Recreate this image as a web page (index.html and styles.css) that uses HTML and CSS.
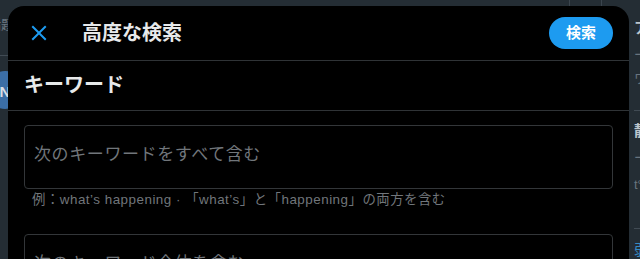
FILE: index.html
```html
<!DOCTYPE html>
<html lang="ja">
<head>
<meta charset="utf-8">
<title>高度な検索</title>
<link rel="stylesheet" href="styles.css">
</head>
<body>
<div class="page">
  <nav class="bg-nav">
    <div class="bg-nav-top"><span class="bg-nav-glyph">話題</span></div>
    <div class="bg-nav-item"><div class="bg-avatar">N</div></div>
  </nav>
  <main class="bg-main">
    <div class="bg-tabs"><span class="bg-tab"></span><span class="bg-tab"></span></div>
  </main>
  <aside class="bg-side">
    <div class="bg-card bg-card-first">
      <div class="bg-strong">アカウント</div>
      <div class="bg-muted">ー/ トレンド</div>
      <div class="bg-muted">ワッ</div>
    </div>
    <div class="bg-card">
      <div class="bg-strong">静岡</div>
      <div class="bg-muted">ー/ トレンド</div>
      <div class="bg-muted">t° ツイート</div>
    </div>
    <div class="bg-link">弱</div>
  </aside>
</div>

<div class="modal">
  <header class="modal-header">
    <button class="close-btn" type="button" aria-label="閉じる">
      <svg viewBox="0 0 24 24" width="24" height="24"><path d="M10.59 12L4.54 5.96l1.42-1.420L12 10.59l6.04-6.05 1.42 1.42L13.41 12l6.05 6.04-1.42 1.42L12 13.41l-6.04 6.05-1.42-1.42L10.59 12z"/></svg>
    </button>
    <h1 class="modal-title">高度な検索</h1>
    <button class="search-btn" type="button">検索</button>
  </header>
  <section class="section">
    <h2 class="section-title">キーワード</h2>
  </section>
  <div class="field">
    <div class="input-box"><span class="placeholder">次のキーワードをすべて含む</span></div>
    <div class="hint">例：what’s happening · 「what’s」と「happening」の両方を含む</div>
  </div>
  <div class="field">
    <div class="input-box"><span class="placeholder">次のキーワード全体を含む</span></div>
  </div>
</div>
</body>
</html>
```
FILE: styles.css
```css
* { box-sizing: border-box; }
html, body { margin: 0; padding: 0; }
body {
  width: 640px;
  height: 259px;
  overflow: hidden;
  background: #242d34;
  font-family: "Liberation Sans", "Noto Sans CJK JP", sans-serif;
  position: relative;
  text-spacing-trim: space-all;
}
.page {
  display: grid;
  grid-template-columns: 60px 1fr 9px;
  height: 259px;
}
.bg-nav { display: flex; flex-direction: column; }
.bg-nav-top {
  height: 56px;
  border-bottom: 1px solid #414b54;
  padding-top: 17px;
  overflow: hidden;
}
.bg-nav-glyph {
  display: block;
  margin-left: -12px;
  font-size: 13px;
  line-height: 16px;
  color: #6b7680;
}
.bg-nav-item { padding-top: 15px; }
.bg-avatar {
  width: 38px;
  height: 38px;
  margin-left: -14px;
  border-radius: 50%;
  background: #3b6ea6;
  color: #d9dee3;
  font-size: 15px;
  font-weight: 700;
  display: flex;
  align-items: center;
  justify-content: center;
  padding-top: 3px;
}
.bg-main { position: relative; }
.bg-tabs { display: flex; height: 6px; padding-left: 509px; }
.bg-tab { width: 32px; border-left: 1px solid #3a444d; }
.bg-side {
  overflow: hidden;
  white-space: nowrap;
  padding-left: 1px;
}
.bg-card { border-bottom: 1px solid #414b54; }
.bg-card-first { padding-top: 18px; height: 111px; }
.bg-card + .bg-card { padding-top: 10px; height: 118px; }
.bg-strong {
  font-size: 15px;
  line-height: 20px;
  font-weight: 700;
  color: #bdc6cd;
}
.bg-muted {
  font-size: 13px;
  line-height: 20px;
  color: #68747e;
  margin-top: 7px;
}
.bg-card-first .bg-muted + .bg-muted { margin-top: 4px; }
.bg-link {
  font-size: 15px;
  line-height: 20px;
  color: #368ac4;
  padding-top: 11px;
}

.modal {
  position: absolute;
  left: 8px;
  top: 6px;
  width: 621px;
  height: 320px;
  background: #000;
  border-radius: 16px;
  overflow: hidden;
}
.modal-header {
  height: 55px;
  display: flex;
  align-items: center;
  padding: 0 16px 1px;
  border-bottom: 1px solid #2f3336;
}
.close-btn {
  width: 36px;
  height: 36px;
  margin-left: -3px;
  padding: 0;
  border: 0;
  background: transparent;
  display: flex;
  align-items: center;
  justify-content: center;
}
.close-btn svg { fill: #1d9bf0; display: block; }
.modal-title {
  margin: 0 0 0 25px;
  flex: 1;
  font-size: 20px;
  line-height: 24px;
  font-weight: 700;
  color: #e7e9ea;
}
.search-btn {
  height: 32px;
  padding: 0 17px;
  border: 0;
  border-radius: 9999px;
  background: #1d9bf0;
  color: #fff;
  font-family: inherit;
  font-size: 15px;
  font-weight: 700;
  line-height: 20px;
}
.section {
  padding: 12px 16px 13px;
  border-bottom: 1px solid #2f3336;
}
.section-title {
  margin: 0;
  font-size: 20px;
  line-height: 24px;
  font-weight: 700;
  color: #e7e9ea;
}
.field { padding: 14px 16px 12px; }
.input-box {
  height: 64px;
  border: 1px solid #333639;
  border-radius: 4px;
  padding: 0 9px 4px;
  display: flex;
  align-items: center;
}
.placeholder {
  font-size: 17px;
  line-height: 24px;
  color: #71767b;
  letter-spacing: 0.6px;
}
.hint {
  padding: 3px 8px 0;
  font-size: 13.4px;
  line-height: 16px;
  color: #71767b;
  letter-spacing: 0.5px;
}
```
